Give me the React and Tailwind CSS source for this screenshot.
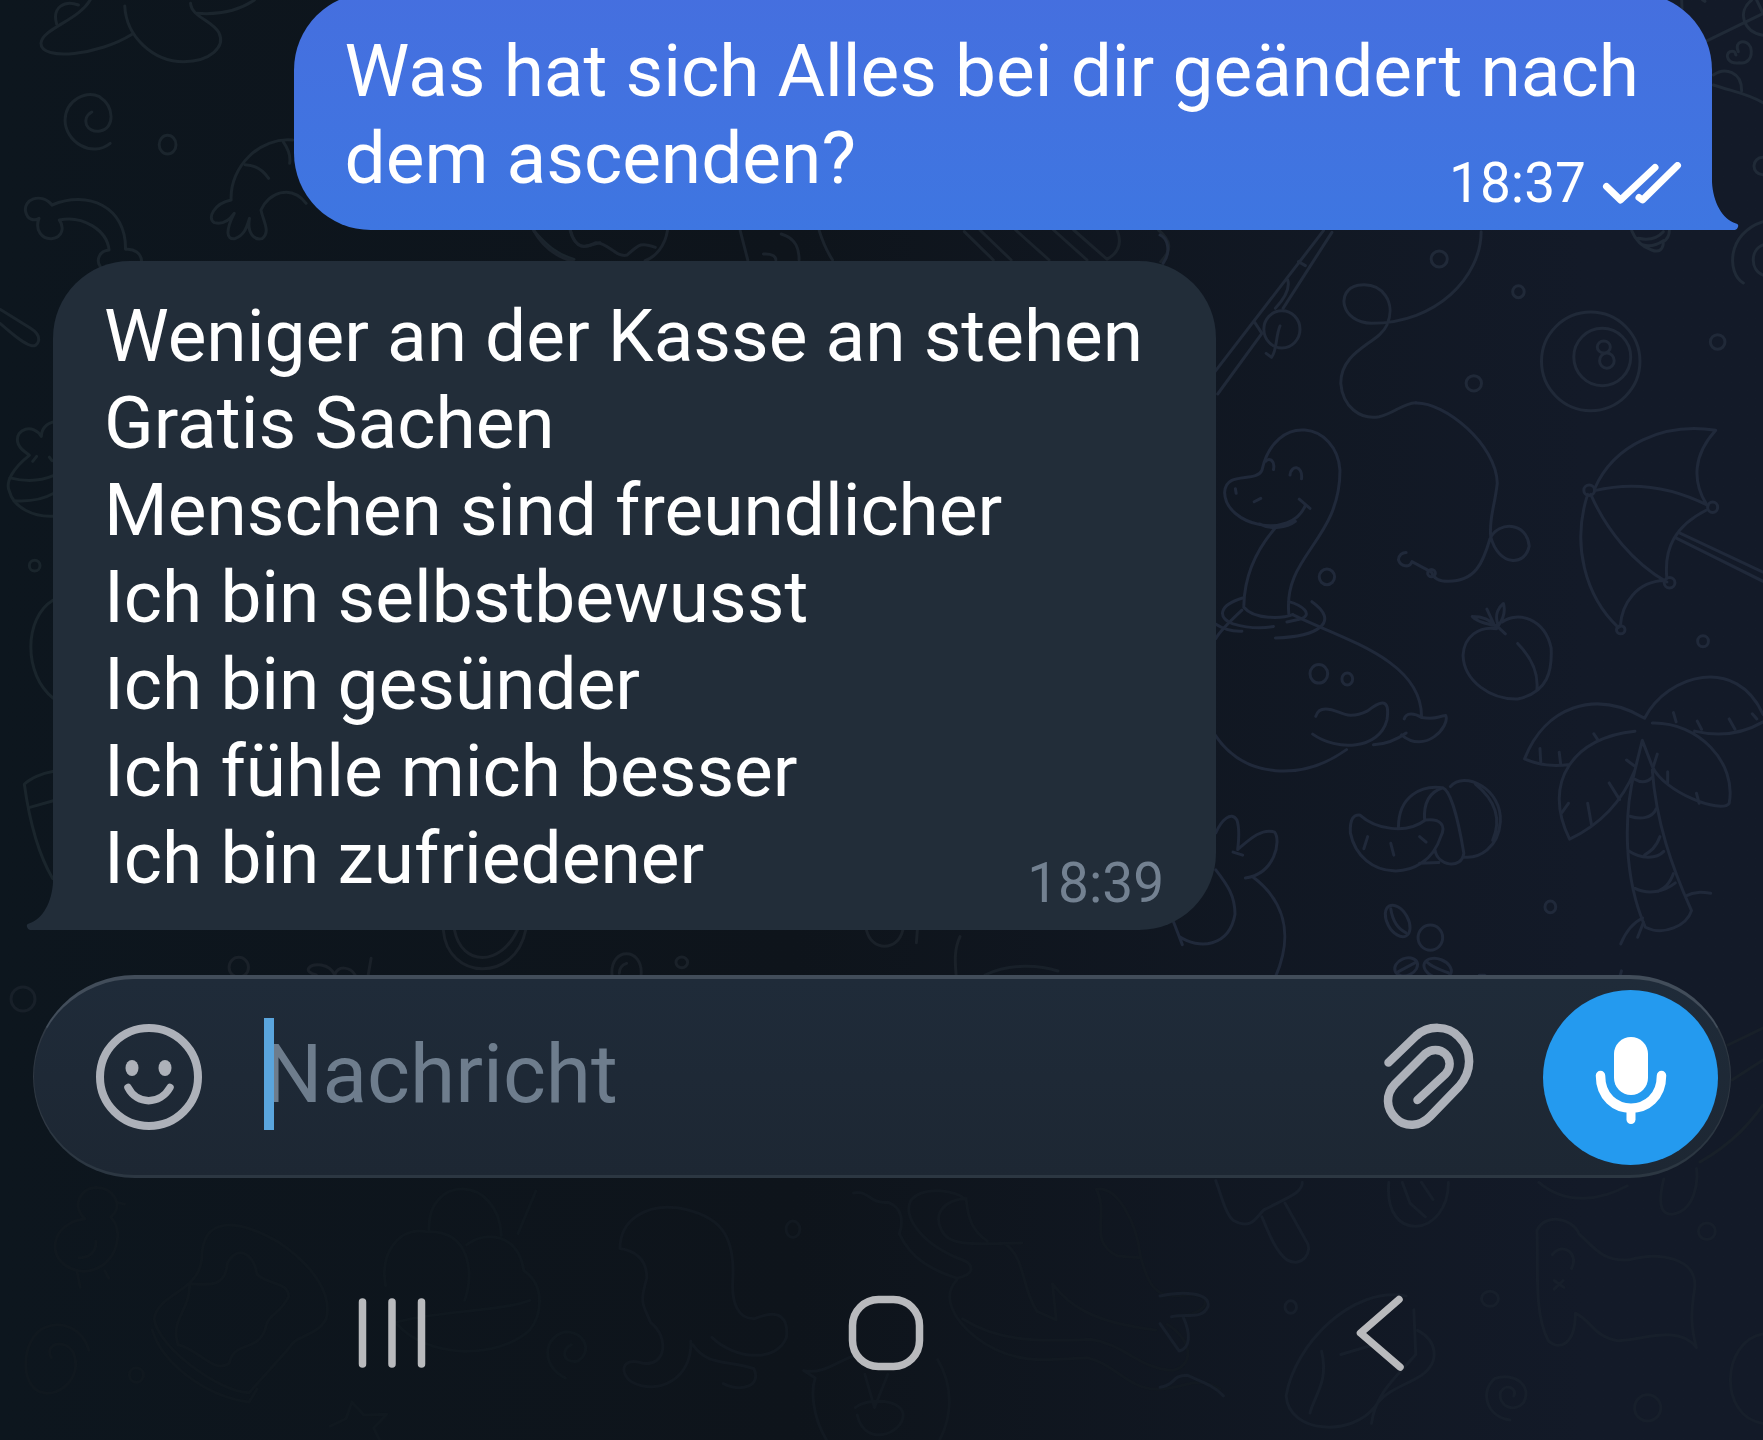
import React, { useState } from 'react';
import clsx from 'clsx';

const messages = [
  {
    id: 1,
    own: true,
    lines: ['Was hat sich Alles bei dir geändert nach', 'dem ascenden?'],
    time: '18:37',
  },
  {
    id: 2,
    own: false,
    lines: [
      'Weniger an der Kasse an stehen',
      'Gratis Sachen',
      'Menschen sind freundlicher',
      'Ich bin selbstbewusst',
      'Ich bin gesünder',
      'Ich fühle mich besser',
      'Ich bin zufriedener',
    ],
    time: '18:39',
  },
];

// Doodle wallpaper: each group holds the outlines of one part of the pattern
const Wallpaper = () => (
  <svg
    className="absolute inset-0 h-full w-full [&_path]:[vector-effect:non-scaling-stroke] [&_ellipse]:[vector-effect:non-scaling-stroke]"
    viewBox="0 0 1763 1440"
    preserveAspectRatio="none"
    fill="none"
    strokeLinecap="round"
    strokeLinejoin="round"
    aria-hidden="true"
  >
    {/* Top left: hat, spirals, bone, paw */}
    <g transform="scale(.38265 .33333)" stroke="#1b252d" strokeWidth="3">
      <path d="M238 -5C210 60 110 85 107 130C107 185 260 165 345 103" />
      <path d="M148 72C135 20 170 0 205 15" />
      <path d="M326 18C330 110 400 185 480 185C550 184 590 140 572 98C556 62 500 50 498 10" />
      <path d="M515 40C570 45 620 35 665 0" />
      <path d="M288 430C240 475 170 425 170 360C172 300 225 270 260 290C300 320 300 385 262 393C225 400 210 355 240 336" />
      <ellipse cx="438" cy="434" rx="22" ry="28" />
      <path d="M136 615C105 575 60 600 67 635C72 662 90 662 102 655C90 690 110 718 135 716C165 712 168 680 155 660C215 645 280 690 285 750C260 752 250 780 262 800" />
      <path d="M136 615C230 570 330 620 328 748C350 745 370 760 370 785" />
      <path d="M765 420C680 410 600 500 604 600C560 610 540 655 560 668C585 675 600 660 612 640C590 690 590 720 614 716C640 705 645 680 652 655C645 700 665 722 685 716C708 695 688 665 682 630C700 580 760 550 800 610" />
      <path d="M640 494C670 495 690 515 702 535M740 425C755 450 760 470 757 490" />
      <path d="M0 928L80 985C115 1010 100 1045 80 1036C60 1030 30 1000 0 970" />
      <path d="M1395 692C1430 740 1460 765 1500 778M1490 692C1500 735 1520 745 1545 735L1568 728" />
    </g>

    {/* Left edge: cupcake, circle, glass */}
    <g transform="translate(0 400) scale(.33333 .35714)" stroke="#1a252c" strokeWidth="3">
      <path d="M165 60C140 65 125 80 124 102C100 65 45 80 53 118C58 140 75 142 88 155C40 190 15 230 28 255C40 300 100 330 165 325" />
      <path d="M98 172L110 158M148 160L156 170M30 218C80 230 120 228 160 212M42 282C90 285 130 278 160 262" />
      <ellipse cx="104" cy="464" rx="16" ry="15" />
      <path d="M160 560C70 610 70 770 160 835" />
      <path d="M158 1040C125 1045 90 1060 73 1076C90 1190 120 1280 158 1340M92 1140L160 1122" />
    </g>

    {/* Strip between the two bubbles */}
    <g transform="translate(500 220) scale(.44643 .33333)" stroke="#1b232c" strokeWidth="3">
      <path d="M75 30C95 80 125 110 165 125M158 32C170 90 190 85 215 68C240 65 260 115 285 105C310 75 315 65 348 82M375 32C370 75 350 110 325 122" />
      <path d="M538 32L555 120M630 42C665 55 670 90 670 120M590 102C610 100 618 110 618 120M715 32C725 75 735 100 745 120" />
      <path d="M1040 35L1105 120M1075 30L1145 120M1155 30L1230 120M1240 30L1315 120M1285 30L1360 118C1395 90 1390 55 1382 30M1475 30C1505 65 1505 90 1480 125" />
    </g>

    {/* Top right corner */}
    <g transform="translate(1480 0) scale(.33333)" stroke="#202a37" strokeWidth="3">
      <path d="M605 0L606 25M668 0L675 4M682 122L850 40M815 0C770 35 790 95 849 106M830 0L849 40" />
      <path d="M775 155C760 122 800 115 812 142C820 175 800 193 778 188C745 193 732 165 750 155C770 150 765 165 768 165" />
      <path d="M700 225C735 200 785 215 785 272M700 255C760 275 800 280 849 308" />
      <ellipse cx="848" cy="498" rx="26" ry="26" />
      <path d="M849 665C740 700 740 820 790 849M849 735C810 750 810 810 849 825" />
      <path d="M455 692C470 730 500 745 515 750C540 760 550 745 550 725C565 715 568 700 568 692M475 715C510 722 535 712 550 695M490 735C515 742 535 732 550 722" />
    </g>

    {/* Fishing rod, line and ball */}
    <g transform="translate(1160 0) scale(.38458 .33333)" stroke="#202938" strokeWidth="3">
      <path d="M0 705C20 715 30 755 8 790M425 692L143 1115M447 697L320 925M265 1000L150 1182M360 785L378 797M332 840C340 870 320 900 300 925M245 965L265 1000" />
      <ellipse cx="317" cy="988" rx="47" ry="56" />
      <path d="M312 978C300 1010 305 1050 290 1072L276 1060" />
      <ellipse cx="726" cy="777" rx="21" ry="24" />
      <ellipse cx="932" cy="875" rx="15" ry="18" />
      <ellipse cx="1450" cy="1026" rx="19" ry="22" />
      <ellipse cx="816" cy="1150" rx="20" ry="23" />
      <path d="M835 695C835 830 720 970 550 970C470 968 455 870 515 856C580 845 615 910 590 975C570 1030 470 1050 470 1150C475 1220 520 1260 570 1250C610 1240 630 1210 665 1208" />
      <ellipse cx="1120" cy="1084" rx="128" ry="148" />
      <ellipse cx="1150" cy="1071" rx="74" ry="86" />
      <ellipse cx="1154" cy="1041" rx="17" ry="18" />
      <ellipse cx="1162" cy="1082" rx="19" ry="23" />
    </g>

    {/* Right side: dinosaur, umbrella, fruit, whale, palm tree */}
    <g transform="translate(1160 400) scale(.38458 .37)" stroke="#20293a" strokeWidth="3">
      <path d="M665 8C740 5 875 120 877 225C870 290 855 320 860 370C880 450 950 450 960 395C955 330 880 325 858 375C840 440 820 490 750 490C725 490 710 480 706 465L655 437C650 455 625 450 620 432C620 420 630 412 640 412" />
      <ellipse cx="706" cy="468" rx="10" ry="10" />
      <path d="M218 555C220 470 255 400 298 348M335 578C320 420 468 380 468 190C460 60 300 30 265 190C250 225 170 190 168 250C170 340 340 380 378 285M362 268L390 293M258 335C290 352 330 345 352 328" />
      <path d="M275 165C285 155 300 165 295 188M338 203C340 175 372 175 368 213M196 240L198 252M245 275L262 266" />
      <ellipse cx="434" cy="478" rx="20" ry="21" />
      <path d="M215 535C150 555 150 590 190 605C230 617 270 617 295 612M335 545C370 555 400 580 365 592L330 600M218 560C245 595 320 590 345 580M395 545C470 600 410 640 300 643M143 605C165 620 190 626 213 625" />
      <path d="M213 568C180 600 155 625 145 645M345 580C470 645 680 700 680 855M143 905C220 1025 370 1030 485 945M397 903C460 950 570 945 590 865C600 800 570 815 540 840C480 870 470 835 430 835C415 835 408 845 405 855M555 932C590 930 620 915 640 900M635 862C640 845 660 845 680 858C720 865 720 855 743 853C755 880 690 960 628 905" />
      <ellipse cx="413" cy="740" rx="23" ry="25" />
      <ellipse cx="487" cy="754" rx="14" ry="16" />
      <path d="M1130 240C1180 120 1310 60 1445 82C1385 150 1385 220 1420 280M1130 245C1230 220 1330 235 1425 285M1120 255C1160 350 1230 440 1318 492M1112 255C1070 390 1105 530 1192 615M1420 298C1340 340 1310 400 1318 482M1312 488C1240 490 1200 550 1197 612M1352 360L1568 465M1340 372L1568 490" />
      <ellipse cx="1116" cy="244" rx="14" ry="14" />
      <ellipse cx="1437" cy="290" rx="13" ry="14" />
      <ellipse cx="1325" cy="494" rx="14" ry="14" />
      <ellipse cx="1198" cy="621" rx="11" ry="11" />
      <ellipse cx="1412" cy="652" rx="14" ry="15" />
      <path d="M875 618C830 610 790 640 788 690C790 760 860 810 930 808C1010 790 1020 730 1017 670C1000 590 930 570 890 600M930 658C960 690 985 730 980 782M898 632L875 610C850 605 825 600 812 585C840 585 860 595 870 610L850 565M878 605C870 580 880 560 893 550C900 575 890 595 880 610" />
      <path d="M1260 860C1320 740 1500 690 1568 850M948 970C1000 830 1130 780 1260 860M948 970C990 990 1030 990 1065 985M1235 895C1080 910 990 1030 1065 1187C1140 1150 1200 1090 1235 1000M1280 873C1400 870 1500 980 1480 1090C1460 1120 1310 1060 1280 990L1254 920L1235 1000C1205 1120 1205 1290 1262 1425C1310 1450 1370 1420 1382 1380C1330 1260 1290 1140 1280 1000M1390 895C1450 910 1510 905 1568 870" />
      <path d="M988 942L990 978M1038 952L1042 985M1128 902L1138 918M1335 845L1342 870M1397 868L1408 890M1480 862L1495 890M1540 848L1552 862M1213 973L1235 990M1168 1035L1195 1080M1112 1090L1122 1148M1062 1090L1045 1115M1293 957L1283 990M1320 1005L1320 1035M1395 1063L1402 1090" />
      <path d="M1235 1025C1250 1035 1265 1035 1280 1020M1222 1125C1250 1135 1280 1130 1290 1105M1218 1218C1250 1240 1290 1242 1310 1220M1235 1320C1270 1338 1310 1330 1340 1305M1300 1180C1290 1210 1275 1220 1260 1230M1335 1280C1325 1310 1310 1320 1295 1328M1368 1340C1390 1328 1410 1330 1432 1333M1255 1400C1225 1415 1210 1440 1198 1470M1257 1412L1242 1452M1200 1543L1195 1560" />
      <ellipse cx="1015" cy="1370" rx="14" ry="16" />
      <path d="M620 1155C620 1070 680 1040 735 1048C755 1055 775 1130 790 1225C785 1270 720 1260 715 1215M735 1048C700 1060 685 1090 688 1135M755 1045C790 1000 890 1050 885 1140C880 1210 830 1240 790 1235M820 1038C870 1080 890 1130 865 1190M520 1122C560 1160 640 1175 690 1135C730 1130 745 1150 730 1180C690 1310 520 1300 495 1170C493 1130 505 1120 520 1122M675 1252L725 1250M540 1180L530 1213M600 1198L608 1230M675 1180L692 1195" />
      <path d="M145 1170C160 1135 185 1110 200 1135C208 1160 205 1190 202 1215C230 1190 265 1155 298 1168C315 1190 300 1280 222 1292M190 1222L215 1230M240 1288C320 1350 350 1440 300 1560M145 1270C175 1310 195 1340 195 1390C180 1480 100 1485 50 1450M35 1410L58 1472" />
      <ellipse cx="618" cy="1408" rx="27" ry="46" transform="rotate(-28 618 1408)" />
      <path d="M600 1375C605 1410 620 1430 640 1440" />
      <ellipse cx="703" cy="1453" rx="32" ry="34" />
      <ellipse cx="640" cy="1532" rx="31" ry="23" transform="rotate(-25 640 1532)" />
      <ellipse cx="722" cy="1536" rx="37" ry="25" transform="rotate(22 722 1536)" />
      <path d="M620 1545L665 1520M695 1520C710 1535 730 1540 750 1548M830 1555L845 1555" />
    </g>

    {/* Strip above the composer */}
    <g transform="translate(200 920) scale(.4847 .33333)" stroke="#1a2129" strokeWidth="3">
      <ellipse cx="80" cy="142" rx="20" ry="30" />
      <path d="M240 165C210 155 225 130 250 135C270 140 275 155 278 165C285 135 310 140 320 165M353 115L347 165M502 30C510 180 650 190 672 30M525 30C540 140 620 140 655 30M850 165C845 80 915 80 910 165M865 160C865 145 870 135 880 130M1375 30C1385 95 1440 95 1450 30M1480 30L1478 68M1568 50C1555 90 1558 130 1560 165" />
      <ellipse cx="994" cy="127" rx="12" ry="16" />
    </g>
    <g stroke="#182029" strokeWidth="3">
      <circle cx="23" cy="999" r="12" />
      <path d="M1728 1045L1763 1028M1732 1080L1763 1060M1700 1162C1735 1142 1752 1120 1763 1105M985 975C1010 963 1040 965 1058 971" />
    </g>

    {/* Bottom left: duckling, toast, snail */}
    <g transform="translate(0 860) scale(.39541 .37)" stroke="#10181f" strokeWidth="3">
      <path d="M315 930L295 925C280 870 200 870 197 935C200 955 210 965 215 970C120 980 110 1100 210 1112C290 1110 320 1010 280 965C290 955 298 945 295 925M195 1115L203 1155M265 1110L275 1130M242 1030C245 1060 225 1075 200 1075" />
      <path d="M510 1080C510 960 600 970 700 1030C800 1100 840 1180 825 1240C800 1290 750 1280 730 1320L630 1440C560 1440 400 1320 390 1240C400 1170 500 1170 510 1080M480 1145C540 1150 570 1150 575 1090C600 1040 640 1060 650 1120C680 1150 730 1140 730 1180C700 1240 680 1220 670 1270C650 1330 590 1300 580 1360C540 1390 500 1320 450 1310C430 1240 480 1220 480 1145M630 1465C520 1450 410 1360 385 1270M630 1465L650 1430" />
      <path d="M130 1345C110 1310 160 1290 185 1330C210 1400 150 1450 110 1440C50 1430 50 1300 110 1265C160 1240 210 1270 225 1325" />
      <path d="M1085 1000C1080 850 1260 850 1268 1015M1355 895L1310 1010M975 1150C960 1060 1010 990 1080 1005C1190 1000 1200 1120 1175 1190M1180 1040C1230 1000 1310 1010 1325 1110C1380 1150 1370 1230 1340 1270C1260 1350 1080 1350 1000 1250C1090 1220 1270 1220 1340 1190" />
      <path d="M1430 1400C1370 1370 1370 1290 1430 1275C1480 1275 1500 1330 1460 1355C1420 1360 1420 1320 1445 1310" />
      <ellipse cx="345" cy="1392" rx="18" ry="20" />
      <path d="M890 1465L920 1500L978 1498L945 1535L960 1568M890 1465L875 1510L835 1530" />
    </g>

    {/* Bottom centre: octopus, lizard, orange */}
    <g transform="translate(620 860) scale(.38265 .37)" stroke="#121921" strokeWidth="3">
      <path d="M0 1050C0 970 70 930 150 940C260 960 300 1010 295 1130C290 1200 310 1240 350 1240C420 1210 440 1240 435 1290C410 1360 300 1350 240 1290M190 1310C230 1370 280 1350 350 1375C370 1420 320 1440 270 1415M0 1050C60 1060 70 1100 70 1130C50 1200 60 1200 80 1250C130 1290 120 1370 60 1360C0 1340 0 1390 30 1410C100 1450 190 1400 185 1300" />
      <ellipse cx="452" cy="998" rx="18" ry="22" />
      <path d="M610 900C650 890 650 930 700 925C740 940 740 980 730 1010C760 1080 820 1110 880 1130C930 1120 930 1090 880 1075C780 1030 740 960 760 920C790 880 880 890 905 920C910 970 920 1000 960 1030M905 915C840 920 820 960 840 1000C860 1040 900 1040 1050 1035M880 1135C840 1180 870 1240 930 1290C1030 1370 1130 1350 1220 1345C1290 1360 1330 1430 1400 1430C1480 1430 1500 1390 1568 1430M895 1240C1000 1310 1130 1300 1230 1295C1320 1310 1350 1370 1440 1380C1500 1370 1500 1300 1430 1255M1010 1040C1060 1080 1050 1160 1090 1220L1140 1243L1130 1145C1170 1200 1230 1250 1400 1270M1245 890C1300 880 1350 980 1360 1070C1380 1150 1400 1190 1480 1175C1560 1170 1540 1230 1450 1235M1245 890C1280 960 1220 1030 1300 1070L1360 1075" />
      <path d="M540 1568C500 1500 500 1430 510 1400L480 1380C530 1390 560 1360 610 1340M830 1350C870 1420 870 1500 835 1568M640 1390L665 1480L700 1390M615 1480C650 1450 740 1460 740 1500C740 1550 640 1590 620 1500" />
    </g>

    {/* Bottom right: game pad, pear, rings */}
    <g transform="translate(1160 900) scale(.38458 .34435)" stroke="#171f2b" strokeWidth="3">
      <path d="M145 815C160 860 170 910 190 930C240 960 250 920 270 900C340 860 370 850 370 820M265 920C280 960 300 1020 330 1045C370 1070 400 1020 380 990L325 880M595 820C580 1000 750 980 750 820M630 820L650 880L690 920M680 820L710 870M985 820C1060 890 1150 870 1215 830M1310 810C1290 900 1310 915 1335 912C1390 900 1400 820 1395 780" />
      <path d="M980 960C1000 910 1070 920 1090 970C1130 1010 1150 1050 1220 1045C1300 1020 1400 1040 1390 1130C1380 1200 1380 1240 1395 1300C1350 1230 1250 1280 1190 1280C1130 1270 1120 1220 1080 1200C1080 1290 1040 1310 1010 1280C970 1200 985 1050 980 960M1020 1030C1050 990 1090 1030 1070 1070M1025 1105L1050 1125M1048 1105L1025 1130" />
      <ellipse cx="340" cy="1182" rx="15" ry="18" />
      <ellipse cx="858" cy="1158" rx="22" ry="22" />
      <ellipse cx="1422" cy="962" rx="22" ry="24" />
      <ellipse cx="1268" cy="1475" rx="34" ry="38" />
      <path d="M640 1150C500 1120 350 1290 328 1440C335 1550 500 1560 560 1470C590 1420 640 1410 680 1380C730 1340 720 1280 670 1250M660 1190L665 1320C620 1380 560 1430 550 1520M420 1310C440 1400 400 1440 390 1490M470 1320L560 1290" />
      <path d="M910 1510C850 1500 830 1430 870 1390C920 1370 970 1410 945 1460C920 1490 880 1470 885 1430C900 1400 930 1420 920 1440" />
      <path d="M1568 1260C1460 1280 1450 1500 1568 1520" />
      <path d="M0 1150C60 1135 130 1140 125 1180C110 1220 70 1200 30 1210M0 1230L50 1310C80 1300 80 1260 60 1210M0 1415C40 1410 30 1380 70 1380C110 1400 140 1410 165 1440" />
    </g>
  </svg>
);

const DoubleCheck = () => (
  <svg className="h-[42px] w-20" viewBox="1602 158 80 42" fill="none" stroke="currentColor" strokeWidth="7" strokeLinecap="round" strokeLinejoin="round" role="img" aria-label="Gelesen">
    <path d="M1606.5 182.5L1620.5 196L1655 163.5" />
    <path d="M1639 193.5L1642.5 196L1677.5 161.5" />
  </svg>
);

// Curved corner at the foot of a bubble
const Tail = ({ own }) => (
  <svg
    className={clsx(
      'absolute bottom-0 h-[60px] w-[27px]',
      own ? 'left-full text-[#3e76e1]' : 'right-full -scale-x-100 text-[#222d39]'
    )}
    viewBox="0 0 27 60"
    fill="currentColor"
    aria-hidden="true"
  >
    <path d="M0 60V12C1 32 10 49 24 53.5Q27 54 26 57Q25 60 23 60Z" />
  </svg>
);

const Message = ({ message }) => {
  const lastLine = message.lines[message.lines.length - 1];

  return (
    <li
      className={clsx(
        'relative w-fit pl-[51px] text-[73px] leading-[87px] text-white',
        message.own
          ? 'self-end rounded-t-[77px] rounded-bl-[77px] bg-linear-to-b from-[#456fdf] to-[#3e76e1] pt-[35px]'
          : 'self-start rounded-t-[77px] rounded-br-[77px] bg-[#222d39] pt-8'
      )}
    >
      {message.lines.slice(0, -1).map((line) => (
        <p key={line} className="pr-[73px]">{line}</p>
      ))}
      {/* The time shares the row of the last line */}
      <div className="flex items-end justify-between">
        <p className="pb-7">{lastLine}</p>
        <div
          className={clsx(
            'flex items-center pb-[19px] text-[55px] leading-[56px]',
            message.own ? 'pr-[30px]' : 'pr-[52px] text-[#738191]'
          )}
        >
          <time>{message.time}</time>
          {message.own && <span className="ml-4"><DoubleCheck /></span>}
        </div>
      </div>
      <Tail own={message.own} />
    </li>
  );
};

const SmileIcon = () => (
  <svg className="h-[108px] w-[108px]" viewBox="0 0 108 108" fill="none" stroke="currentColor" strokeLinecap="round">
    <circle cx="54" cy="54" r="49" strokeWidth="8" />
    <ellipse cx="37" cy="45" rx="6.5" ry="8" fill="currentColor" stroke="none" />
    <ellipse cx="70" cy="45" rx="6.5" ry="8" fill="currentColor" stroke="none" />
    <path d="M33 64.5C42 82 65 82 75 64.5" strokeWidth="7.5" />
  </svg>
);

const ClipIcon = () => (
  <svg className="h-[108px] w-24" viewBox="1380 1022 96 108" fill="none" stroke="currentColor" strokeWidth="8.5" strokeLinecap="round" strokeLinejoin="round">
    <path d="M1388.5 1061.5L1416 1035C1428 1024 1448 1024 1459 1036C1473 1050 1472 1071 1459 1085.500L1430 1115.500C1420 1126 1405 1126.500 1396 1117.500C1385.500 1107 1385.500 1093 1395 1083L1425 1053C1431 1047.500 1440 1047.500 1445.500 1053C1451 1058.500 1451 1067 1445.500 1073L1417.500 1099" />
  </svg>
);

const MicIcon = () => (
  <svg className="h-24 w-24" viewBox="1582 1029 96 96" fill="none" stroke="currentColor" strokeLinecap="round">
    <rect x="1613" y="1037" width="34" height="58" rx="17" fill="currentColor" stroke="none" />
    <path d="M1599.500 1075.500C1599.500 1119 1660.500 1119 1660.500 1075.500" strokeWidth="9.500" />
    <path d="M1630 1110V1119.500" strokeWidth="9" />
  </svg>
);

const Composer = () => {
  const [text, setText] = useState('');

  return (
    <form
      className="relative mr-8 ml-[33px] mt-[45px] flex h-[203px] items-center rounded-full border-x border-t-4 border-b-[3px] border-x-[#2f3843] border-t-[#424d5a] border-b-[#2c3742] bg-linear-to-b from-[#1f2b39] to-[#1d2733] pr-3 pl-[61px]"
      onSubmit={(e) => e.preventDefault()}
    >
      <button type="button" aria-label="Emoji" className="text-[#adb1b9]">
        <SmileIcon />
      </button>
      <div className="relative mb-1.5 ml-[61px] flex min-w-0 flex-1 items-center">
        <input
          type="text"
          aria-label="Nachricht"
          placeholder="Nachricht"
          value={text}
          onChange={(e) => setText(e.target.value)}
          className="h-[112px] w-full bg-transparent text-[82px] text-white caret-[#5aa5dd] outline-none placeholder:text-[#6e7d8d]"
        />
        {!text && <span className="absolute top-0 left-0 h-[112px] w-[10px] bg-[#5aa5dd]" />}
      </div>
      <button type="button" aria-label="Datei anhängen" className="text-[#adb1b9]">
        <ClipIcon />
      </button>
      <button
        type="submit"
        aria-label="Sprachnachricht"
        className="ml-[67px] flex size-[175px] shrink-0 items-center justify-center rounded-full bg-[#249aef] text-white"
      >
        <MicIcon />
      </button>
    </form>
  );
};

const SystemNav = () => (
  <nav className="relative grid flex-1 grid-cols-3 place-items-center pt-12 pr-[136px] pl-[145px] text-[#b9babd]">
    <button type="button" aria-label="Letzte Apps">
      <svg className="size-20" viewBox="0 0 80 80" fill="none" stroke="currentColor" strokeWidth="7.5" strokeLinecap="round">
        <path d="M10.500 9V71M40 9V71M69.500 9V71" />
      </svg>
    </button>
    <button type="button" aria-label="Startseite">
      <svg className="size-20" viewBox="0 0 80 80" fill="none" stroke="currentColor" strokeWidth="7.5">
        <rect x="6.500" y="6.500" width="67" height="67" rx="26" />
      </svg>
    </button>
    <button type="button" aria-label="Zurück">
      <svg className="size-20" viewBox="0 0 80 80" fill="none" stroke="currentColor" strokeWidth="7.5" strokeLinecap="round" strokeLinejoin="round">
        <path d="M59 6.500L20.500 40L60 74" />
      </svg>
    </button>
  </nav>
);

const App = () => (
  <main className="relative flex min-h-screen flex-col overflow-hidden bg-linear-to-r from-[#0d161e] via-[#0e141b] via-45% to-[#131a28] to-90% font-[Roboto,sans-serif]">
    <Wallpaper />
    <ul className="relative -mt-[7px] flex flex-col gap-[31px] pr-[51px] pl-[53px]">
      {messages.map((message) => (
        <Message key={message.id} message={message} />
      ))}
    </ul>
    <Composer />
    <SystemNav />
  </main>
);

export default App;
